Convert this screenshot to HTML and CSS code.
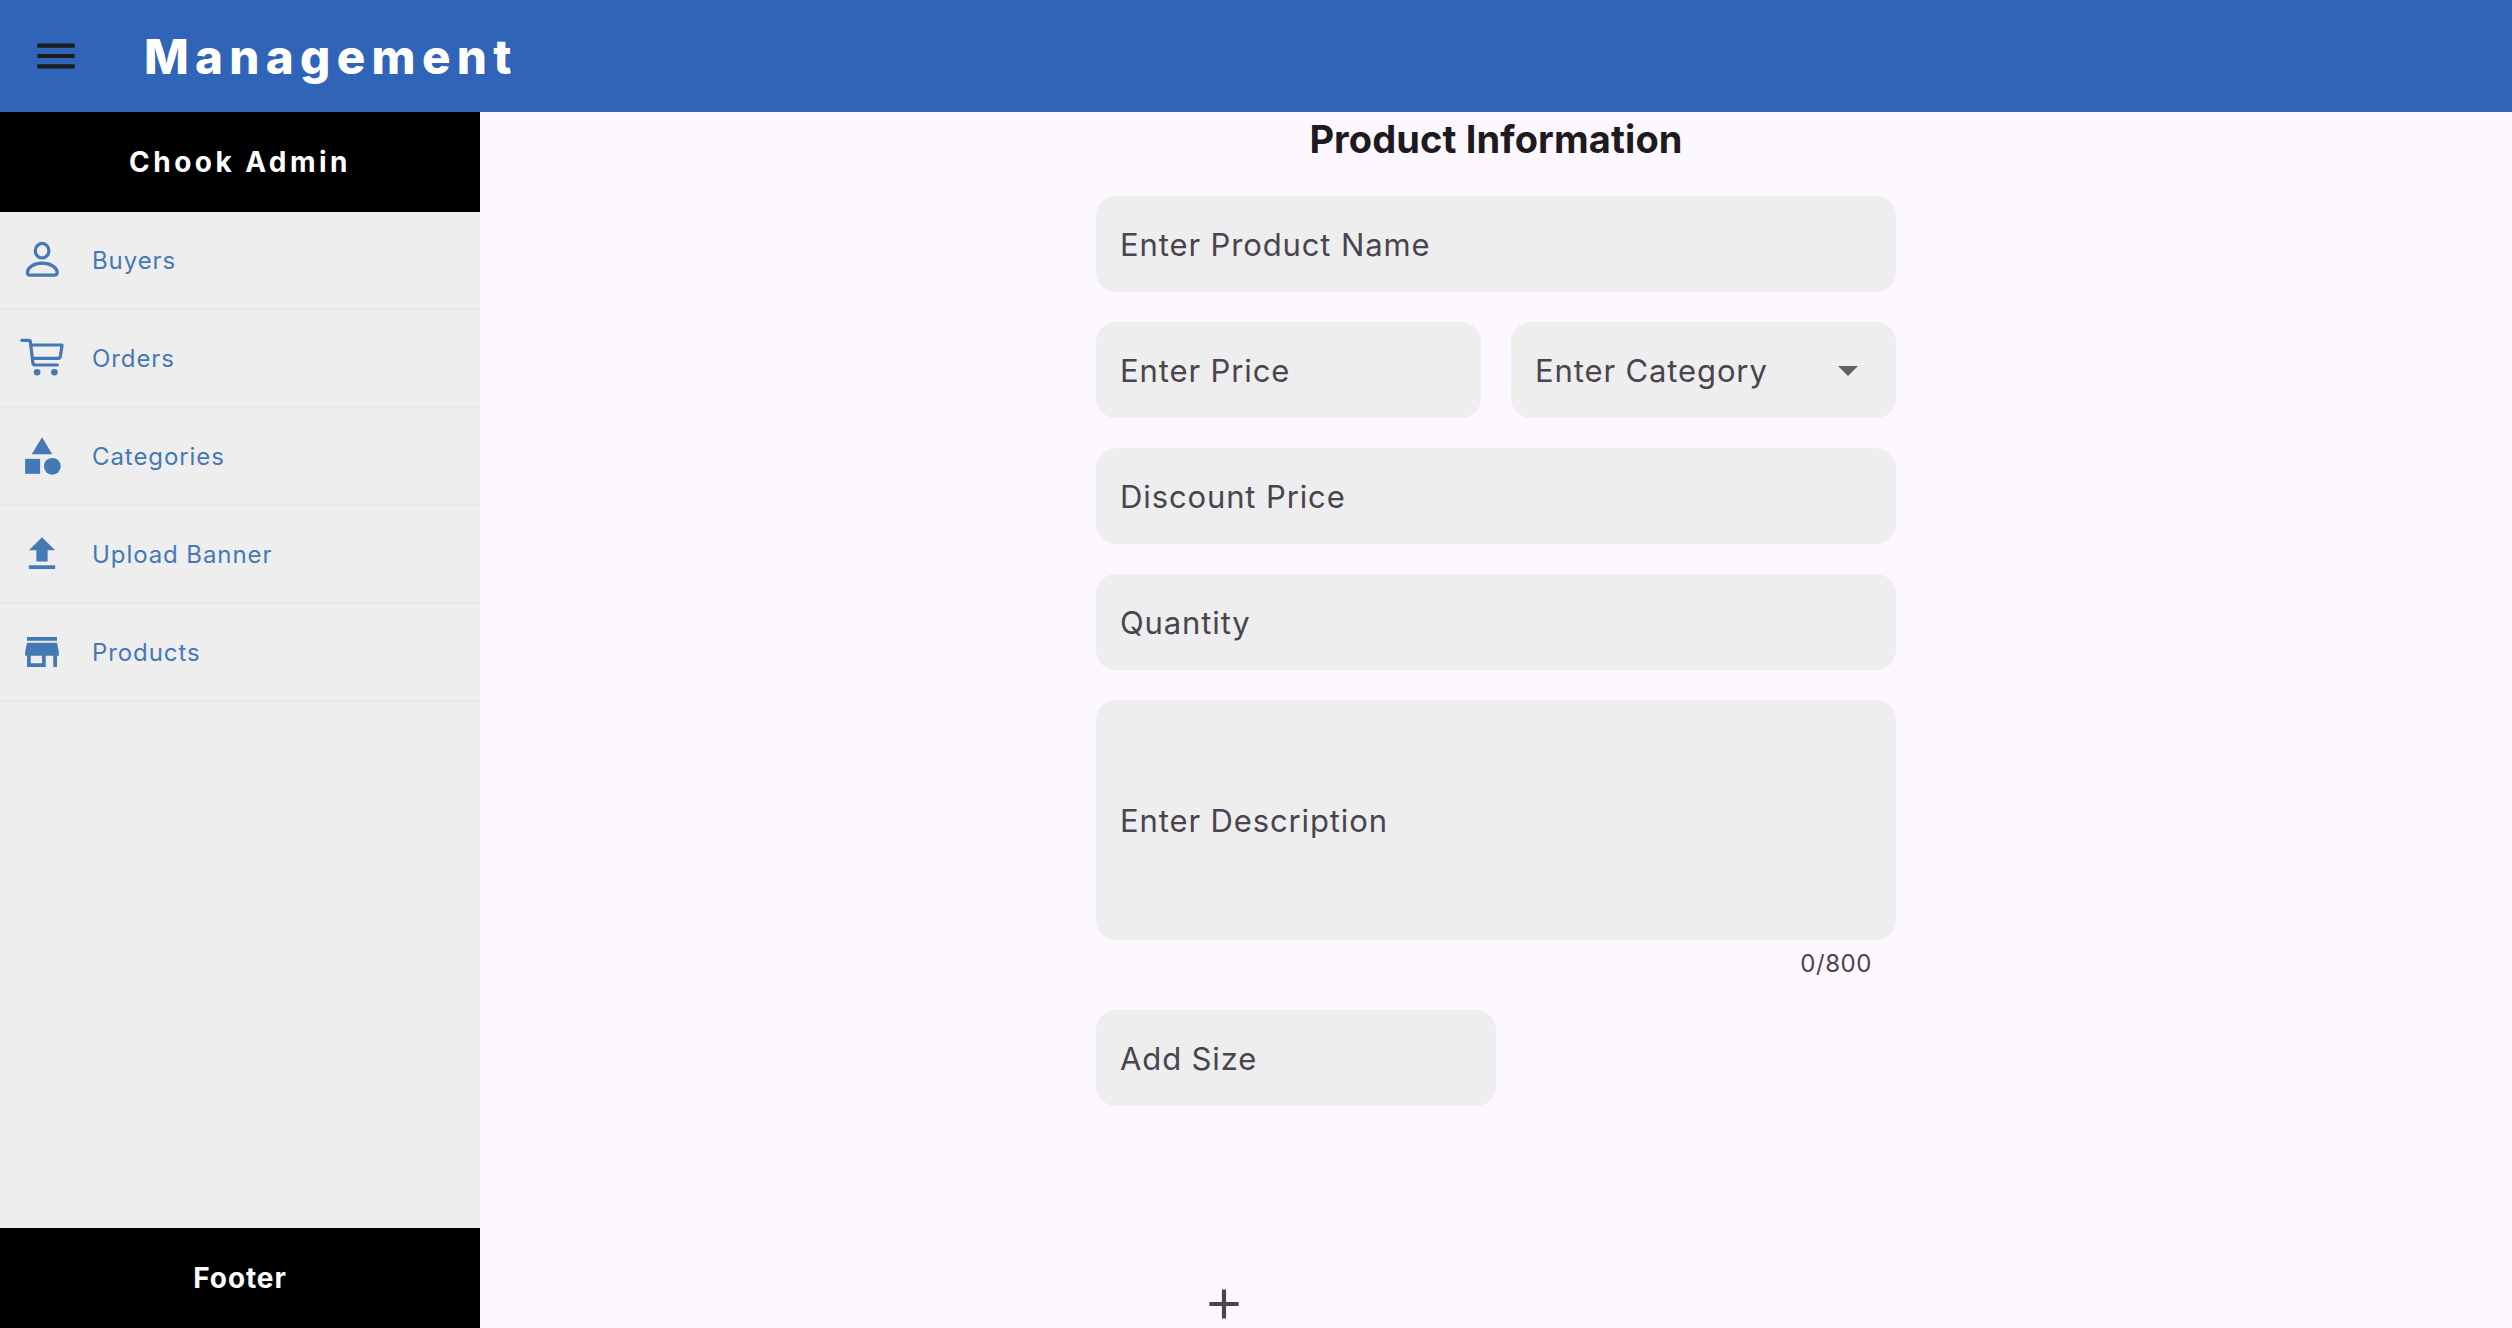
FILE: index.html
```html
<!DOCTYPE html>
<html lang="en">
<head>
<meta charset="utf-8">
<title>Management</title>
<link rel="stylesheet" href="styles.css">
</head>
<body>
<header class="topbar">
  <svg class="menu-icon" viewBox="0 0 24 24"><path d="M3 18h18v-2H3v2zm0-5h18v-2H3v2zm0-7v2h18V6H3z"/></svg>
  <h1 class="topbar-title">Management</h1>
</header>
<div class="layout">
  <aside class="sidebar">
    <div class="sidebar-head">Chook Admin</div>
    <nav class="nav">
      <a class="nav-item">
        <svg class="nav-icon nav-icon-line" viewBox="-0.5 -0.5 46 46"><ellipse cx="22.6" cy="13.2" rx="6.8" ry="7.3"/><path d="M10.6 37.6H34.8Q37.7 37.6 37.7 35C37.7 30.5 31.5 25.6 22.7 25.6S7.900 30.5 7.900 35Q7.900 37.6 10.6 37.6Z"/></svg>
        <span>Buyers</span>
      </a>
      <a class="nav-item">
        <svg class="nav-icon nav-icon-line" viewBox="-0.5 -0.5 46 46"><path d="M2.3 4.8H9.3Q10.7 4.8 10.9 6.3L13.3 27Q13.6 29.5 16 29.5H38"/><path d="M11.3 9.5H42.6L40.9 20.6Q40.5 22.8 38.3 22.8H13"/><circle class="wheel" cx="17.6" cy="36.8" r="3.3"/><circle class="wheel" cx="34.9" cy="36.8" r="3.3"/></svg>
        <span>Orders</span>
      </a>
      <a class="nav-item">
        <svg class="nav-icon" viewBox="-0.267 -0.267 24.533 24.533"><path d="M12 2l-5.500 9h11z"/><circle cx="17.500" cy="17.500" r="4.500"/><path d="M3 13.500h8v8H3z"/></svg>
        <span>Categories</span>
      </a>
      <a class="nav-item">
        <svg class="nav-icon" viewBox="-0.267 -0.267 24.533 24.533"><path d="M9 16h6v-6h4l-7-7-7 7h4zm-4 2h14v2H5z"/></svg>
        <span>Upload Banner</span>
      </a>
      <a class="nav-item">
        <svg class="nav-icon" viewBox="-0.267 -0.267 24.533 24.533"><path d="M20 4H4v2h16V4zm1 10v-2l-1-5H4l-1 5v2h1v6h10v-6h4v6h2v-6h1zm-9 4H6v-4h6v4z"/></svg>
        <span>Products</span>
      </a>
    </nav>
    <div class="sidebar-foot">Footer</div>
  </aside>
  <main class="content">
    <form class="form">
      <h2 class="form-title">Product Information</h2>
      <div class="field">Enter Product Name</div>
      <div class="field-row">
        <div class="field">Enter Price</div>
        <div class="field field-select">
          <span>Enter Category</span>
          <svg class="arrow" viewBox="0 0 24 24"><path d="M7 10l5 5 5-5z"/></svg>
        </div>
      </div>
      <div class="field">Discount Price</div>
      <div class="field">Quantity</div>
      <div class="field field-tall">Enter Description</div>
      <div class="counter">0/800</div>
      <div class="field field-half">Add Size</div>
      <svg class="add-icon" viewBox="0 0 24 24"><path d="M19 13h-6v6h-2v-6H5v-2h6V5h2v6h6v2z"/></svg>
    </form>
  </main>
</div>
</body>
</html>
```
FILE: styles.css
```css
* { box-sizing: border-box; }

body {
  margin: 0;
  height: 1328px;
  display: flex;
  flex-direction: column;
  overflow: hidden;
  background: #fdf8ff;
  color: #1d1b20;
  font-family: Inter, "Liberation Sans", sans-serif;
}

h1, h2 { margin: 0; }

.topbar {
  flex: none;
  height: 112px;
  display: flex;
  align-items: center;
  gap: 63px;
  padding-left: 31px;
  background: #2f64b9;
}

.menu-icon {
  width: 50px;
  height: 50px;
  fill: #1d1b20;
}

.topbar-title {
  padding-top: 1px;
  color: #fff;
  font-size: 47.5px;
  font-weight: 800;
  line-height: 60px;
  letter-spacing: 6.3px;
}

.layout {
  flex: 1;
  min-height: 0;
  display: flex;
}

.sidebar {
  width: 480px;
  display: flex;
  flex-direction: column;
  background: #eee;
}

.sidebar-head,
.sidebar-foot {
  height: 100px;
  display: flex;
  align-items: center;
  justify-content: center;
  background: #000;
  color: #fff;
  font-size: 28px;
  font-weight: 700;
}

.sidebar-head { letter-spacing: 3.45px; }
.sidebar-foot { letter-spacing: 0.9px; }

.nav { flex: 1; }

.nav-item {
  height: 98px;
  display: flex;
  align-items: center;
  gap: 27px;
  padding-left: 19px;
  border-bottom: 2px solid #e7e7e7;
  color: #4579b3;
  font-size: 24px;
  line-height: 30px;
  letter-spacing: 0.92px;
}

.nav-item span { padding-top: 1px; }

.nav-icon {
  width: 46px;
  height: 46px;
  fill: currentColor;
}

.nav-icon-line {
  fill: none;
  stroke: currentColor;
  stroke-width: 3.2;
  stroke-linecap: round;
  stroke-linejoin: round;
}

.wheel {
  fill: currentColor;
  stroke: none;
}

.content {
  flex: 1;
  display: flex;
  justify-content: center;
}

.form {
  width: 800px;
  display: flex;
  flex-direction: column;
  gap: 30px;
}

.form-title {
  height: 54px;
  font-size: 38px;
  font-weight: 700;
  line-height: 54px;
  letter-spacing: 0.12px;
  text-align: center;
}

.field {
  flex: none;
  height: 96px;
  display: flex;
  align-items: center;
  padding: 1px 24px 0;
  border-radius: 20px;
  background: #eee;
  color: #49454f;
  font-size: 31px;
  letter-spacing: 0.88px;
}

.field-row {
  display: grid;
  grid-template-columns: 1fr 1fr;
  gap: 30px;
}

.field-select { justify-content: space-between; }

.arrow {
  width: 48px;
  height: 48px;
  margin-bottom: 1px;
  fill: #616161;
}

.field-tall { height: 240px; }

.counter {
  height: 30px;
  margin-top: -22px;
  padding-right: 24px;
  color: #49454f;
  font-size: 24px;
  line-height: 32px;
  letter-spacing: 0.55px;
  text-align: right;
}

.field-half {
  width: 400px;
  margin-top: 2px;
}

.add-icon {
  flex: none;
  width: 50px;
  height: 50px;
  margin: 143px 0 0 103px;
  fill: #49454f;
}
```
